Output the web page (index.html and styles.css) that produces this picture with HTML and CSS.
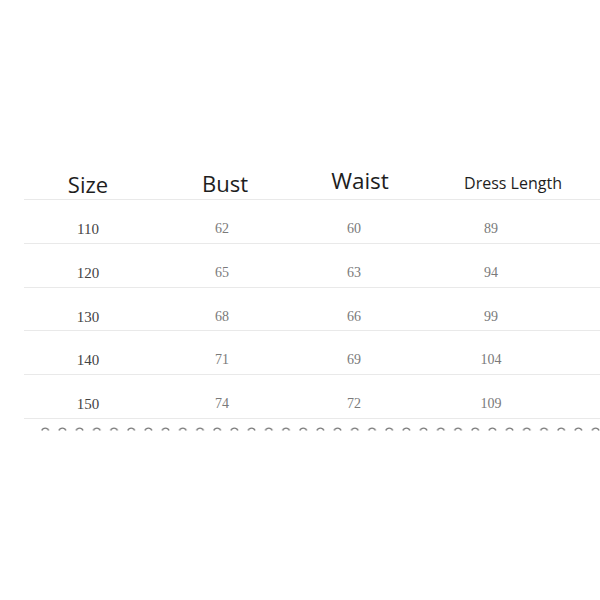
FILE: index.html
```html
<!DOCTYPE html>
<html>
<head>
<meta charset="utf-8">
<link rel="stylesheet" href="styles.css">
</head>
<body>
<div class="page">
  <div class="table">
    <div class="row head">
      <div class="h h-size">Size</div>
      <div class="h h-bust">Bust</div>
      <div class="h h-waist">Waist</div>
      <div class="h h-len">Dress Length</div>
    </div>
    <div class="row data"><div class="c first">110</div><div class="c">62</div><div class="c">60</div><div class="c">89</div></div>
    <div class="row data"><div class="c first">120</div><div class="c">65</div><div class="c">63</div><div class="c">94</div></div>
    <div class="row data"><div class="c first">130</div><div class="c">68</div><div class="c">66</div><div class="c">99</div></div>
    <div class="row data"><div class="c first">140</div><div class="c">71</div><div class="c">69</div><div class="c">104</div></div>
    <div class="row data"><div class="c first">150</div><div class="c">74</div><div class="c">72</div><div class="c">109</div></div>
    <svg class="scallop" width="576" height="8" viewBox="0 0 576 8">
      <defs>
        <pattern id="arc" x="17" y="0" width="17.2" height="8" patternUnits="userSpaceOnUse">
          <path d="M0.8 6.5 A3.6 3.6 0 0 1 7.6 6.5" fill="none" stroke="#7c7c7c" stroke-width="1.4"/>
        </pattern>
      </defs>
      <rect x="17" y="0" width="559" height="8" fill="url(#arc)"/>
    </svg>
  </div>
</div>
</body>
</html>
```
FILE: styles.css
```css
html, body {
  margin: 0;
  padding: 0;
  background: #ffffff;
}
.page {
  width: 600px;
  height: 600px;
  padding-top: 160px;
  box-sizing: border-box;
}
.table {
  margin-left: 24px;
  width: 576px;
}
.row {
  display: grid;
  grid-template-columns: 128px 140px 124px 150px;
  border-bottom: 1px solid #e9e9e9;
}
.head {
  height: 39px;
  align-items: end;
}
.h {
  font-family: "Open Sans", "Noto Sans", sans-serif;
  color: #1e1e1e;
  font-size: 22px;
  line-height: 30px;
  text-align: center;
  white-space: nowrap;
}
.h-size { padding-bottom: 0; }
.h-bust { padding-left: 6px; padding-bottom: 1px; }
.h-waist { padding-left: 12px; padding-bottom: 3px; font-size: 22.5px; }
.h-len { padding-left: 44px; padding-bottom: 5px; font-size: 16px; line-height: 22px; }
.data {
  height: 42.8px;
}
.c {
  font-family: "Liberation Serif", "Times New Roman", serif;
  font-size: 14px;
  line-height: 20px;
  color: #7a7a7a;
  text-align: center;
  padding-top: 19px;
}
.c.first {
  font-size: 15px;
  color: #444444;
}
.scallop {
  display: block;
  margin-top: 5px;
}
```
